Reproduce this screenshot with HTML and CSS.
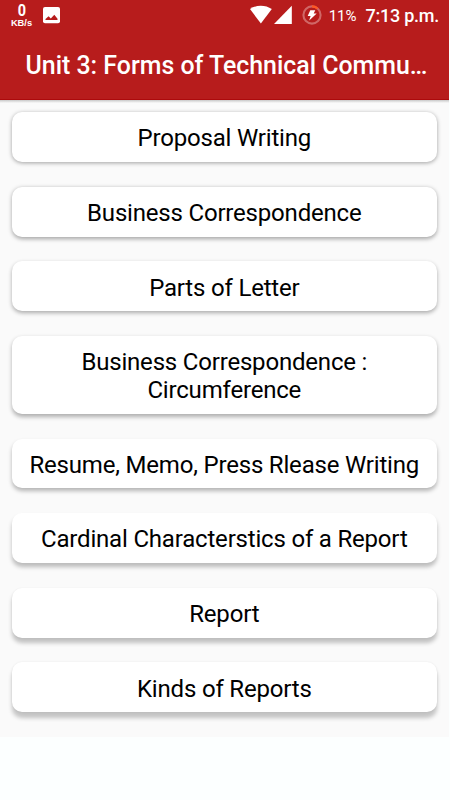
FILE: index.html
```html
<!DOCTYPE html>
<html lang="en">
<head>
    <meta charset="UTF-8">
    <meta name="viewport" content="width=device-width, initial-scale=1.0">
    <title>Unit 3: Forms of Technical Communication</title>
    <link rel="stylesheet" href="styles.css">
</head>
<body>
    <div class="screen">
        <header class="app_header">
            <div class="status_bar">
                <div class="speed">
                    <span class="speed_value">0</span>
                    <span class="speed_unit">KB/s</span>
                </div>
                <svg class="picture_icon" width="17" height="17" viewBox="0 0 17 17">
                    <rect width="17" height="16.3" rx="2" fill="#fff"/>
                    <path d="M2.5 13.1V12L5.6 9.2l2.2 2.3 3.5-3.8 3.2 4.1v1.3z" fill="#b71c1c"/>
                </svg>
                <div class="status_right">
                    <svg class="wifi_icon" width="23" height="19" viewBox="0 0 23 19">
                        <path d="M0 4.1C6-0.4 15.6-0.4 21.8 4.1L10.9 18.5z" fill="#fff"/>
                    </svg>
                    <svg class="signal_icon" width="19" height="19" viewBox="0 0 19 19">
                        <path d="M17.8 0.7V18.9H0z" fill="#fff"/>
                    </svg>
                    <svg class="battery_icon" width="20" height="20" viewBox="0 0 20 20">
                        <circle cx="10" cy="10" r="8.6" fill="none" stroke="#d06766" stroke-width="2.1"/>
                        <path d="M10 1.4A8.6 8.6 0 0 1 15.6 3.5" fill="none" stroke="#ff5722" stroke-width="2.1"/>
                        <path d="M8.3 5.3h5l-1.6 3.1h3L7.2 15.6l1.4-4.5H5.7z" fill="#fff"/>
                    </svg>
                    <span class="battery_text">11%</span>
                    <span class="clock">7:13 p.m.</span>
                </div>
            </div>
            <h1 class="title">Unit 3: Forms of Technical Commu…</h1>
        </header>

        <main class="topics">
            <div class="topic depth1">Proposal Writing</div>
            <div class="topic depth2">Business Correspondence</div>
            <div class="topic depth3">Parts of Letter</div>
            <div class="topic depth4">Business Correspondence :<br>Circumference</div>
            <div class="topic depth5">Resume, Memo, Press Rlease Writing</div>
            <div class="topic depth6">Cardinal Characterstics of a Report</div>
            <div class="topic depth7">Report</div>
            <div class="topic depth8">Kinds of Reports</div>
        </main>
    </div>
</body>
</html>
```
FILE: styles.css
```css
* {
    box-sizing: border-box;
}
body {
    margin: 0;
    background-color: #fcffff;
    font-family: Roboto, "Liberation Sans", sans-serif;
}
.screen {
    width: 449px;
}

/* header */
.app_header {
    height: 100px;
    background-color: #b71c1c;
    border-bottom: 1px solid #ac0a0c;
    color: #fff;
}
.status_bar {
    display: flex;
    height: 32px;
    padding-left: 10px;
    padding-right: 10px;
}
.speed {
    display: flex;
    flex-direction: column;
    align-items: center;
    width: 23px;
    font-weight: bold;
}
.speed_value {
    height: 18px;
    font-size: 17px;
    line-height: 21px;
    transform: scaleX(0.85);
}
.speed_unit {
    font-family: "Liberation Sans", sans-serif;
    font-size: 9.3px;
    line-height: 10px;
}
.picture_icon {
    margin-top: 7px;
    margin-left: 10px;
}
.status_right {
    display: flex;
    margin-left: auto;
}
.wifi_icon {
    margin-top: 5px;
}
.signal_icon {
    margin-top: 5px;
    margin-left: 1px;
}
.battery_icon {
    margin-top: 5px;
    margin-left: 9px;
}
.battery_text {
    margin-left: 7px;
    font-size: 15px;
    line-height: 32px;
}
.clock {
    margin-left: 9px;
    font-size: 18px;
    font-weight: 500;
    letter-spacing: -0.25px;
    line-height: 32px;
}
.title {
    margin: 0;
    padding-left: 25.5px;
    font-size: 24.9px;
    font-weight: 500;
    line-height: 68px;
    white-space: nowrap;
}

/* topic list */
.topics {
    display: flex;
    flex-direction: column;
    gap: 24.8px;
    height: 637px;
    padding: 12.3px 12.2px 0 11.8px;
    background: linear-gradient(#c8c8c8, #fafafa 3px);
}
.topic {
    padding: 12.2px 0 9.6px;
    border-radius: 10px;
    background-color: #fff;
    color: #000;
    font-size: 24px;
    letter-spacing: -0.19px;
    line-height: 28px;
    text-align: center;
    white-space: nowrap;
}

/* the shadow drops further down the list */
.depth1 {
    box-shadow: 0 1px 4px rgba(0, 0, 0, 0.36);
}
.depth2 {
    box-shadow: 0 1.5px 4px rgba(0, 0, 0, 0.34);
}
.depth3 {
    box-shadow: 0 2px 4px rgba(0, 0, 0, 0.32);
}
.depth4 {
    box-shadow: 0 2.5px 4px rgba(0, 0, 0, 0.3);
}
.depth5 {
    box-shadow: 0 3px 4px rgba(0, 0, 0, 0.28);
}
.depth6 {
    box-shadow: 0 4px 4px rgba(0, 0, 0, 0.25);
}
.depth7 {
    box-shadow: 0 4.5px 4px rgba(0, 0, 0, 0.23), 0 0 2px rgba(0, 0, 0, 0.06);
}
.depth8 {
    box-shadow: 0 5.5px 4px rgba(0, 0, 0, 0.22), 0 0 2px rgba(0, 0, 0, 0.08);
}
```
